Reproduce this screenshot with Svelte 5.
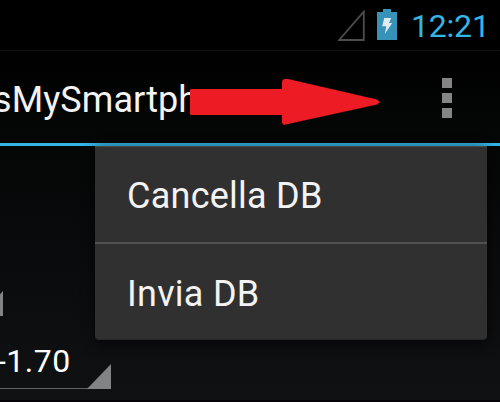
<script>
  const items = ['Cancella DB', 'Invia DB'];
</script>

<div class="screen">
  <header class="status">
    <svg class="signal" width="28" height="32" viewBox="0 0 28 32">
      <path d="M26.8 2.6V31H2.2Z" fill="none" stroke="#4d4d4d" stroke-width="1.8" />
    </svg>
    <svg class="battery" width="20" height="31" viewBox="0 0 20 31">
      <path d="M0 3H6V0H14V3H20V31H0Z" fill="#3792b7" />
      <path d="M7.2 9H14.2L12 14H15.2L7.8 25L9.3 17.2H5.2Z" fill="#deecf2" />
    </svg>
    <span class="clock">12:21</span>
  </header>

  <div class="action">
    <span class="title">sMySmartph</span>
    <div class="overflow"><i></i><i></i><i></i></div>
    <svg class="arrow" width="190" height="46" viewBox="0 0 190 46">
      <path d="M1 10H92V2L94 0H98L187 20.5L190 23L187 25.5L98 45L94 46L92 44V36H1L0 35V11Z" fill="#ed1c24" />
    </svg>
  </div>

  <main>
    <div class="spinner upper"></div>
    <div class="spinner lower"><span>-1.70</span></div>
    <nav class="menu">
      {#each items as item}
        <div class="item"><span>{item}</span></div>
      {/each}
    </nav>
  </main>
</div>

<style>
  :global(body) { margin: 0; background: #000; }
  .screen {
    width: 500px;
    height: 402px;
    overflow: hidden;
    display: flex;
    flex-direction: column;
    background: #000;
    font-family: Roboto, sans-serif;
    white-space: nowrap;
  }
  svg { display: block; flex: none; }
  .status {
    box-sizing: border-box;
    height: 51px;
    flex: none;
    display: flex;
    align-items: flex-start;
    border-bottom: 1px solid #121212;
  }
  .signal { margin: 9px 0 0 337px; }
  .battery { margin: 9px 0 0 12px; }
  .clock {
    margin: 6px 0 0 14px;
    font-size: 32px;
    line-height: 40px;
    letter-spacing: -0.2px;
    color: #33b5e5;
  }
  .action {
    box-sizing: border-box;
    position: relative;
    height: 95px;
    flex: none;
    display: flex;
    align-items: flex-start;
    justify-content: space-between;
    border-bottom: 3px solid #33b5e5;
    background: linear-gradient(#000, #050706);
  }
  .title {
    margin: 27px 0 0 -7px;
    font-size: 36px;
    line-height: 44px;
    letter-spacing: 0.08px;
    color: #f3f3f3;
  }
  .overflow {
    display: flex;
    flex-direction: column;
    gap: 5px;
    margin: 27px 48px 0 0;
  }
  .overflow i { width: 10px; height: 10px; background: #858585; }
  .arrow { position: absolute; left: 190px; top: 28px; }
  main {
    box-sizing: border-box;
    position: relative;
    height: 256px;
    flex: none;
    display: flex;
    flex-direction: column;
    align-items: flex-start;
    background: linear-gradient(#050706, #090b0d 45%, #101113);
    border-bottom: 2px solid #060308;
  }
  .spinner {
    position: relative;
    box-sizing: border-box;
    flex: none;
    border-bottom: 1px solid #636465;
  }
  .spinner::after {
    content: '';
    position: absolute;
    right: 0;
    bottom: -1px;
    width: 24px;
    height: 25px;
    background: #828385;
    clip-path: polygon(100% 0, 100% 100%, 0 100%);
  }
  .upper { width: 3px; height: 24px; margin-top: 146px; }
  .lower { width: 111px; height: 52px; margin-top: 21px; }
  .lower span {
    display: block;
    margin: 4px 0 0 -3px;
    font-size: 32px;
    line-height: 40px;
    letter-spacing: 0.5px;
    color: #fff;
  }
  .menu {
    position: absolute;
    left: 95px;
    top: 0;
    width: 392px;
    height: 194px;
    box-sizing: border-box;
    border-top: 1px solid #484848;
    border-bottom: 1px solid #262626;
    border-radius: 0 0 4px 4px;
    background: #303030;
    box-shadow: 0 3px 13px rgba(0, 0, 0, 0.75);
  }
  .item {
    box-sizing: border-box;
    height: 97px;
    padding: 28px 0 0 32px;
    font-size: 36px;
    line-height: 44px;
    letter-spacing: 0.25px;
    color: #f3f3f3;
  }
  .item:first-child { padding-top: 27px; border-bottom: 2px solid #505050; }
</style>
